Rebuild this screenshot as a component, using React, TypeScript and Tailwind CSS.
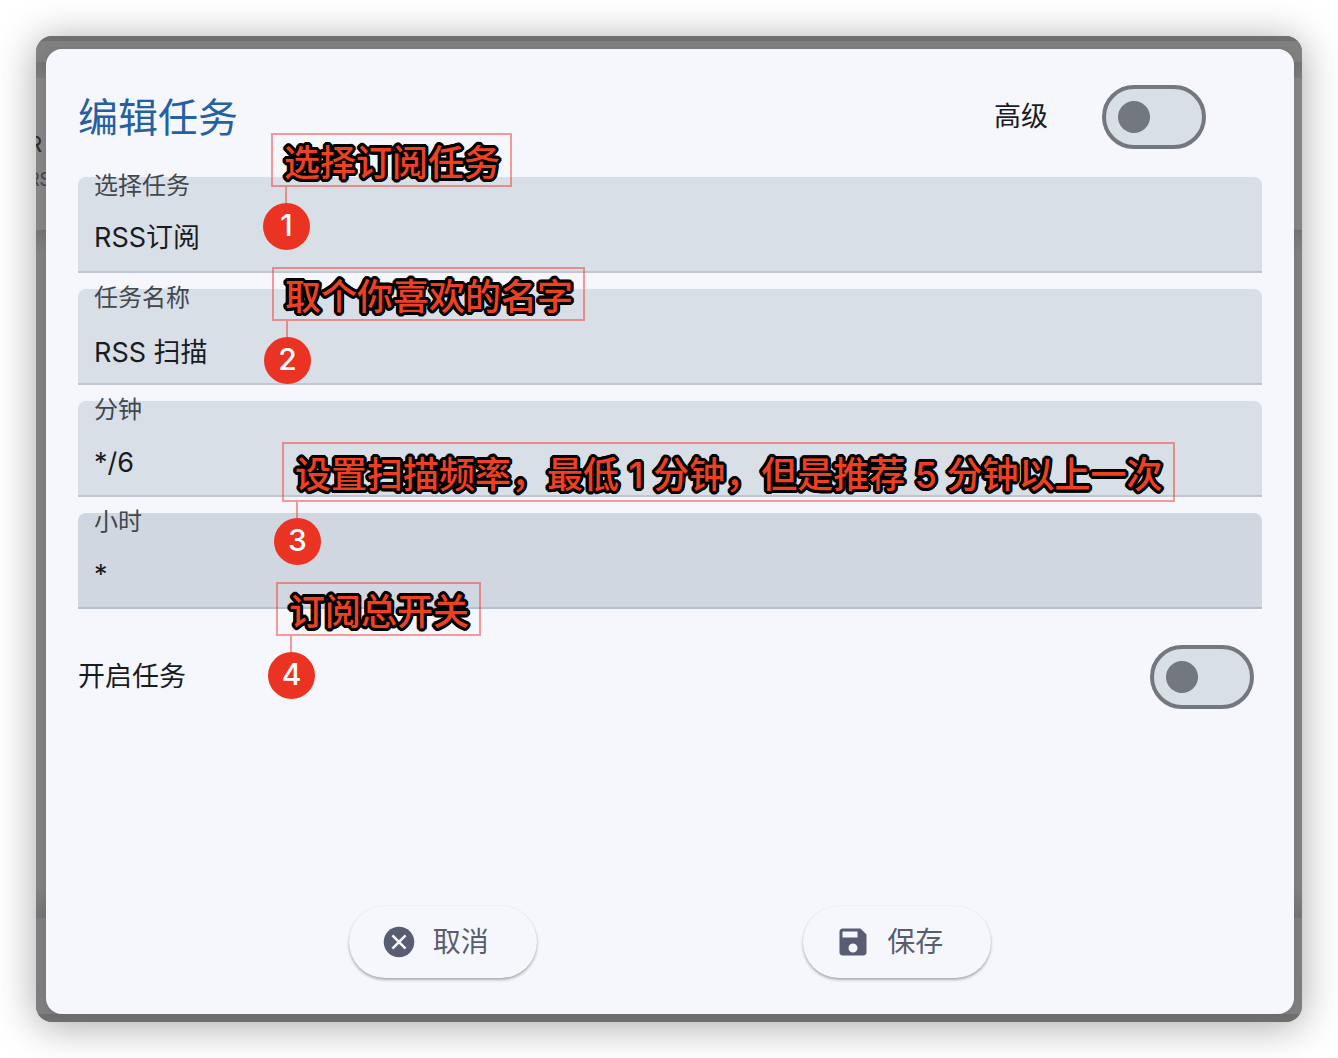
import React from "react";

interface CalloutProps {
  step: number;
  text: string;
  className: string;
  boxClassName?: string;
}

// Numbered hint that floats over a form row
const Callout = ({ step, text, className, boxClassName = "h-[54px]" }: CalloutProps) => (
  <div className={`pointer-events-none absolute z-10 flex flex-col items-start ${className}`}>
    <div
      className={`flex items-center whitespace-nowrap border-2 border-[#f03c32]/50 pt-1.5 pr-2.5 pl-[11px] text-[36px] leading-none font-medium text-[#ee4023] [text-shadow:3px_0_#000,-3px_0_#000,0_3px_#000,0_-3px_#000,2px_2px_#000,-2px_2px_#000,2px_-2px_#000,-2px_-2px_#000,3px_1px_#000,3px_-1px_#000,-3px_1px_#000,-3px_-1px_#000,1px_3px_#000,-1px_3px_#000,1px_-3px_#000,-1px_-3px_#000] ${boxClassName}`}
    >
      {text}
    </div>
    <div className="ml-[14px] h-4 w-0.5 bg-[#f03c32]/50" />
    <div className="-ml-2 flex size-[47px] items-center justify-center rounded-full bg-[#eb3323] pb-1 text-[30px] leading-none font-medium text-white">
      {step}
    </div>
  </div>
);

interface FieldProps {
  id: string;
  label: string;
  value: string;
  type?: "input" | "select";
  active?: boolean;
  children?: React.ReactNode;
}

const Field = ({ id, label, value, type = "input", active = false, children }: FieldProps) => {
  const control =
    "block h-[76px] w-full appearance-none bg-transparent px-4 pt-2.5 text-[27px] text-[#191c1e] outline-none";

  return (
    <div
      className={`relative rounded-t-lg border-b-2 ${
        active ? "border-[#b7bfcb] bg-[#d0d7e1]" : "border-[#c1c7d0] bg-[#d8dfe7]"
      }`}
    >
      <label htmlFor={id} className="block px-4 text-2xl leading-[18px] text-[#42474e]">
        {label}
      </label>
      {type === "select" ? (
        <select id={id} defaultValue={value} className={control}>
          <option value={value}>{value}</option>
        </select>
      ) : (
        <input id={id} type="text" defaultValue={value} className={control} />
      )}
      {children}
    </div>
  );
};

const Toggle = ({ id }: { id: string }) => (
  <input
    id={id}
    type="checkbox"
    role="switch"
    className="flex h-16 w-[104px] shrink-0 appearance-none items-center rounded-full border-4 border-[#73777f] bg-[#d8dfe7] px-3 before:size-8 before:rounded-full before:bg-[#73777f] before:content-[''] checked:justify-end"
  />
);

// The dimmed page behind the dialog
const Backdrop = () => (
  <div aria-hidden="true" className="absolute inset-0 flex flex-col overflow-hidden rounded-2xl bg-[#828282]">
    <div className="h-[5px] bg-[#707072]" />
    <div className="h-[21px] bg-[#808080]" />
    <div className="h-4 bg-gradient-to-b from-[#747474] to-[#7c7c7c]" />
    <div className="h-[152px] bg-[#868686] pt-[54px] text-[#2b2c2e]">
      <div className="-ml-2 text-[22px] leading-6">R</div>
      <div className="-ml-2 pt-3 text-lg leading-6 text-[#434446]">RS</div>
    </div>
    <div className="h-6 bg-gradient-to-b from-[#747474] to-[#828282]" />
    <div className="flex-1 bg-gradient-to-b from-[#828282] from-95% to-[#747474]" />
    <div className="h-24 bg-[#7f7f81]" />
    <div className="h-2 bg-[#6f6f6f]" />
  </div>
);

const CancelIcon = () => (
  <svg viewBox="0 0 24 24" className="size-9" fill="currentColor" aria-hidden="true">
    <path d="M12 1.8C6.36 1.8 1.8 6.36 1.8 12S6.36 22.2 12 22.2 22.2 17.64 22.2 12 17.64 1.8 12 1.8z" />
    <path d="M7.6 7.6l8.8 8.8M16.4 7.6l-8.8 8.8" stroke="#f6f7fc" strokeWidth="1.7" />
  </svg>
);

const SaveIcon = () => (
  <svg viewBox="0 0 24 24" className="size-9" fill="currentColor" aria-hidden="true">
    <path d="M17 3H5c-1.11 0-2 .9-2 2v14c0 1.1.89 2 2 2h14c1.1 0 2-.9 2-2V7l-4-4zm-5 16c-1.66 0-3-1.34-3-3s1.34-3 3-3 3 1.34 3 3-1.34 3-3 3zm3-10H5V5h10v4z" />
  </svg>
);

const PillButton = ({ icon, children }: { icon: React.ReactNode; children: React.ReactNode }) => (
  <button
    type="button"
    className="flex h-[72px] w-[188px] items-center gap-4 rounded-full bg-[#f6f7fc] pl-8 text-[28px] text-[#585d71] shadow-[0_2px_3px_rgba(0,0,0,0.3),0_0_2px_rgba(0,0,0,0.06)]"
  >
    {icon}
    {children}
  </button>
);

export default function App() {
  return (
    <div className="flex min-h-screen bg-white p-9 font-['Inter','Noto_Sans_CJK_SC',sans-serif]">
      <div className="relative flex flex-1 rounded-2xl pt-[13px] pr-2 pb-2 pl-[10px] shadow-[0_4px_40px_rgba(0,0,0,0.35)]">
        <Backdrop />
        <form
          role="dialog"
          aria-labelledby="title"
          className="relative flex flex-1 flex-col rounded-2xl bg-[#f6f7fc] px-8 py-9 shadow-[0_0_12px_rgba(0,0,0,0.08)]"
        >
          <div className="mb-7 flex items-center justify-between pr-14">
            <h1 id="title" className="pt-0.5 text-[40px] leading-none text-[#2561a1]">
              编辑任务
            </h1>
            <div className="flex items-center gap-[54px]">
              <label htmlFor="advanced" className="text-[27px] text-[#191c1e]">
                高级
              </label>
              <Toggle id="advanced" />
            </div>
          </div>

          <div className="flex flex-col gap-4">
            <Field id="task" label="选择任务" value="RSS订阅" type="select">
              <Callout step={1} text="选择订阅任务" className="-top-11 left-[193px]" />
            </Field>
            <Field id="name" label="任务名称" value="RSS 扫描">
              <Callout step={2} text="取个你喜欢的名字" className="-top-[22px] left-[194px]" />
            </Field>
            <Field id="minute" label="分钟" value="*/6">
              <Callout
                step={3}
                text="设置扫描频率，最低 1 分钟，但是推荐 5 分钟以上一次"
                className="top-[41px] left-[204px]"
                boxClassName="h-[60px]"
              />
            </Field>
            <Field id="hour" label="小时" value="*" active>
              <Callout step={4} text="订阅总开关" className="top-[69px] left-[198px]" />
            </Field>
          </div>

          <div className="mt-9 flex items-center justify-between pr-2">
            <label htmlFor="enabled" className="text-[27px] text-[#191c1e]">
              开启任务
            </label>
            <Toggle id="enabled" />
          </div>

          <div className="mt-auto flex justify-evenly px-1">
            <PillButton icon={<CancelIcon />}>取消</PillButton>
            <PillButton icon={<SaveIcon />}>保存</PillButton>
          </div>
        </form>
      </div>
    </div>
  );
}
